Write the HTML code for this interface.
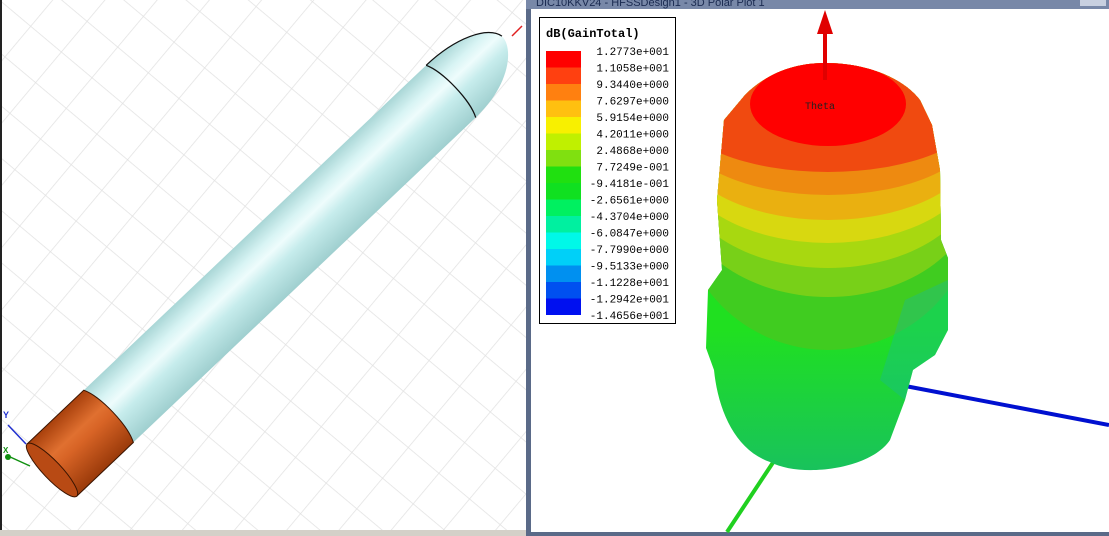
<!DOCTYPE html>
<html><head><meta charset="utf-8"><style>
html,body{margin:0;padding:0;width:1109px;height:536px;overflow:hidden;background:#fff}
svg{display:block}
</style></head><body>
<svg width="1109" height="536" viewBox="0 0 1109 536" xmlns="http://www.w3.org/2000/svg">
<defs>
<pattern id="grid" width="40" height="40" patternUnits="userSpaceOnUse" patternTransform="rotate(40)">
<rect width="40" height="40" fill="#fff"/>
<path d="M0 0H40M0 0V40" stroke="#e2e2e2" stroke-width="1.5" fill="none"/>
</pattern>
<linearGradient id="cyl" x1="0" y1="-36" x2="0" y2="36" gradientUnits="userSpaceOnUse">
<stop offset="0" stop-color="#a9d6d6"/><stop offset="0.25" stop-color="#d8f4f4"/><stop offset="0.4" stop-color="#eefcfc"/><stop offset="0.6" stop-color="#c6ecec"/><stop offset="1" stop-color="#9fcfcf"/>
</linearGradient>
<linearGradient id="cop" x1="0" y1="-36" x2="0" y2="36" gradientUnits="userSpaceOnUse">
<stop offset="0" stop-color="#a8400c"/><stop offset="0.35" stop-color="#e07030"/><stop offset="0.5" stop-color="#d86426"/><stop offset="1" stop-color="#9a3a0a"/>
</linearGradient>
<linearGradient id="bot" x1="0" y1="330" x2="0" y2="480" gradientUnits="userSpaceOnUse">
<stop offset="0" stop-color="#20e020"/><stop offset="1" stop-color="#18c060"/>
</linearGradient>
<clipPath id="bc"><path d="M825 63 C870 63 905 80 920 100 L932 125 L940 170 L941 240 L948 258 L948 330 L935 355 L913 370 L905 400 L890 440 C870 470 800 478 770 462 C735 450 718 410 714 370 L706 348 L708 290 L722 270 L717 200 L724 120 L745 95 C770 70 800 63 825 63 Z"/></clipPath>
</defs>
<rect x="0" y="0" width="526" height="536" fill="url(#grid)"/>
<rect x="0" y="0" width="2" height="536" fill="#222"/>
<rect x="0" y="530" width="526" height="6" fill="#d4d0c8"/>
<g transform="translate(52,470) rotate(-43.5)">
<path d="M78 -36 H550 C590 -36 622 -22 625 -5 C626 10 600 36 550 36 H78 Z" fill="url(#cyl)"/>
<path d="M550 -36 C590 -36 622 -22 625 -5" fill="none" stroke="#111" stroke-width="1.2"/>
<path d="M550 -36 C558 -20 558 20 550 36" fill="none" stroke="#111" stroke-width="1.2"/>
<path d="M0 -36 H78 C86 -20 86 20 78 36 H0 Z" fill="url(#cop)" stroke="#3a1400" stroke-width="1"/>
<ellipse cx="0" cy="0" rx="9" ry="36" fill="#b84a14" stroke="#3a1400" stroke-width="1"/>
</g>
<line x1="8" y1="456" x2="30" y2="466" stroke="#109010" stroke-width="1.5"/>
<line x1="8" y1="425" x2="26" y2="444" stroke="#2030d0" stroke-width="1.5"/>
<text x="3" y="418" font-family="Liberation Sans,sans-serif" font-size="9" fill="#2030d0" font-weight="bold">Y</text>
<text x="3" y="453" font-family="Liberation Sans,sans-serif" font-size="8" fill="#109010" font-weight="bold">X</text>
<circle cx="8" cy="457" r="3" fill="#109010"/>
<line x1="512" y1="36" x2="522" y2="26" stroke="#e02020" stroke-width="1.5"/>
<rect x="526" y="0" width="583" height="536" fill="#5a6a88"/>
<rect x="526" y="0" width="583" height="9" fill="#7888a8"/>
<text x="536" y="6" font-family="Liberation Sans,sans-serif" font-size="11" fill="#1a2a50">DIC10KKV24 - HFSSDesign1 - 3D Polar Plot 1</text>
<rect x="1080" y="0" width="26" height="6" fill="#c8d0e0"/>
<rect x="531" y="9" width="578" height="523" fill="#fff"/>
<line x1="900" y1="385" x2="1109" y2="425" stroke="#0010d0" stroke-width="4"/>
<line x1="778" y1="455" x2="727" y2="532" stroke="#20d020" stroke-width="4"/>
<g clip-path="url(#bc)">
<rect x="700" y="60" width="260" height="420" fill="url(#bot)"/>
<ellipse cx="828" cy="200" rx="150" ry="150" fill="#40cc20"/>
<ellipse cx="828" cy="185" rx="150" ry="112" fill="#78d018"/>
<ellipse cx="828" cy="170" rx="150" ry="98" fill="#a8d810"/>
<ellipse cx="828" cy="155" rx="150" ry="88" fill="#d8d810"/>
<ellipse cx="828" cy="140" rx="150" ry="80" fill="#eab010"/>
<ellipse cx="828" cy="125" rx="150" ry="70" fill="#ee8a10"/>
<ellipse cx="828" cy="110" rx="150" ry="62" fill="#f04a10"/>
<ellipse cx="828" cy="104" rx="78" ry="42" fill="#ff0000"/>
<path d="M905 300 L948 280 L948 360 L913 370 L905 400 L880 380 Z" fill="#18b8a0" opacity="0.35"/>
</g>
<rect x="823" y="20" width="4" height="60" fill="#e00000"/>
<path d="M825 10 L833 34 L817 34 Z" fill="#e00000"/>
<text x="805" y="109" font-family="Liberation Mono,monospace" font-size="10" fill="#222">Theta</text>
<rect x="539.5" y="17.5" width="136" height="306" fill="#fff" stroke="#000"/>
<text x="546" y="37" font-family="Liberation Mono,monospace" font-size="12" font-weight="bold" fill="#000">dB(GainTotal)</text>
<g font-family="Liberation Mono,monospace" font-size="11" fill="#000" text-anchor="end">
<rect x="546" y="51" width="35" height="16.5" fill="#ff0000"/>
<rect x="546" y="67.5" width="35" height="16.5" fill="#ff4010"/>
<rect x="546" y="84" width="35" height="16.5" fill="#ff8010"/>
<rect x="546" y="100.5" width="35" height="16.5" fill="#ffc010"/>
<rect x="546" y="117" width="35" height="16.5" fill="#f8f000"/>
<rect x="546" y="133.5" width="35" height="16.5" fill="#c0f000"/>
<rect x="546" y="150" width="35" height="16.5" fill="#80e010"/>
<rect x="546" y="166.5" width="35" height="16.5" fill="#20e010"/>
<rect x="546" y="183" width="35" height="16.5" fill="#10e020"/>
<rect x="546" y="199.5" width="35" height="16.5" fill="#00f060"/>
<rect x="546" y="216" width="35" height="16.5" fill="#00f0a0"/>
<rect x="546" y="232.5" width="35" height="16.5" fill="#00f8e8"/>
<rect x="546" y="249" width="35" height="16.5" fill="#00d0f8"/>
<rect x="546" y="265.5" width="35" height="16.5" fill="#0090f0"/>
<rect x="546" y="282" width="35" height="16.5" fill="#0050f0"/>
<rect x="546" y="298.5" width="35" height="16.5" fill="#0010f0"/>
<text x="669" y="55">1.2773e+001</text>
<text x="669" y="71.5">1.1058e+001</text>
<text x="669" y="88">9.3440e+000</text>
<text x="669" y="104.5">7.6297e+000</text>
<text x="669" y="121">5.9154e+000</text>
<text x="669" y="137.5">4.2011e+000</text>
<text x="669" y="154">2.4868e+000</text>
<text x="669" y="170.5">7.7249e-001</text>
<text x="669" y="187">-9.4181e-001</text>
<text x="669" y="203.5">-2.6561e+000</text>
<text x="669" y="220">-4.3704e+000</text>
<text x="669" y="236.5">-6.0847e+000</text>
<text x="669" y="253">-7.7990e+000</text>
<text x="669" y="269.5">-9.5133e+000</text>
<text x="669" y="286">-1.1228e+001</text>
<text x="669" y="302.5">-1.2942e+001</text>
<text x="669" y="319">-1.4656e+001</text>
</g>
</svg>
</body></html>
